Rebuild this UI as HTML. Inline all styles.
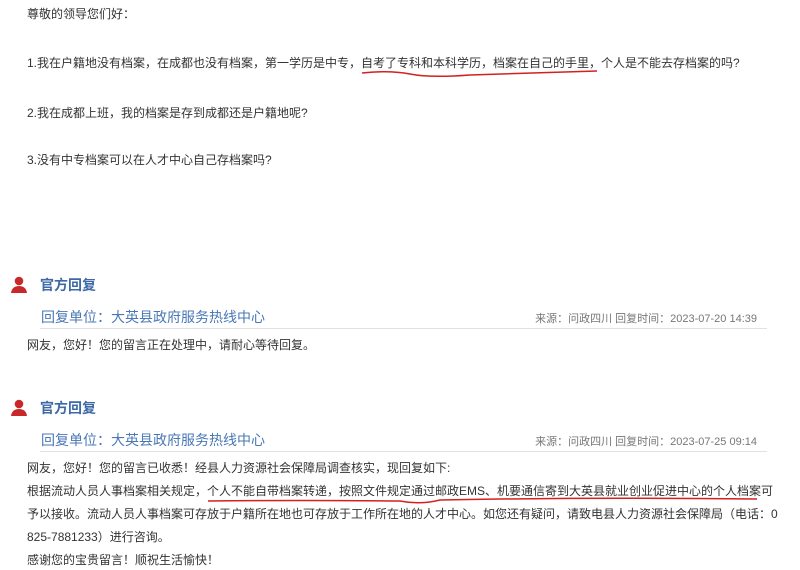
<!DOCTYPE html>
<html><head><meta charset="utf-8"><style>
body{margin:0;width:800px;height:570px;background:#fff;position:relative;overflow:hidden;font-family:"Liberation Sans","Noto Sans CJK SC",sans-serif;color:#333;font-size:12px}
.t{position:absolute;white-space:nowrap;line-height:16px}
.h{position:absolute;left:40px;font-size:14px;font-weight:bold;color:#3d6aa6;white-space:nowrap}
.u{position:absolute;left:41px;font-size:14px;color:#4a78b5;white-space:nowrap}
.s{position:absolute;right:43px;font-size:11px;color:#777;white-space:nowrap}
.d{position:absolute;left:40px;width:727px;height:1px;background:#e2e2e2}
.ic{position:absolute;left:10px;width:18px;height:17px}
</style></head><body>
<div class="t" style="left:27px;top:6px">尊敬的领导您们好：</div>
<div class="t" style="left:27px;top:55px">1.我在户籍地没有档案，在成都也没有档案，第一学历是中专，自考了专科和本科学历，档案在自己的手里，个人是不能去存档案的吗?</div>
<div class="t" style="left:27px;top:105px">2.我在成都上班，我的档案是存到成都还是户籍地呢?</div>
<div class="t" style="left:27px;top:152px">3.没有中专档案可以在人才中心自己存档案吗?</div>

<svg class="ic" style="top:276px" viewBox="0 0 18 17"><circle cx="9" cy="5" r="4.3" fill="#c8282a"/><path d="M1 17 Q2 10 9 10 Q16 10 17 17Z" fill="#c8282a"/></svg>
<div class="h" style="top:275px">官方回复</div>
<div class="u" style="top:307px">回复单位：大英县政府服务热线中心</div>
<div class="s" style="top:310px">来源：问政四川 回复时间：2023-07-20 14:39</div>
<div class="d" style="top:328px"></div>
<div class="t" style="left:27px;top:337px">网友，您好！您的留言正在处理中，请耐心等待回复。</div>

<svg class="ic" style="top:399px" viewBox="0 0 18 17"><circle cx="9" cy="5" r="4.3" fill="#c8282a"/><path d="M1 17 Q2 10 9 10 Q16 10 17 17Z" fill="#c8282a"/></svg>
<div class="h" style="top:398px">官方回复</div>
<div class="u" style="top:430px">回复单位：大英县政府服务热线中心</div>
<div class="s" style="top:433px">来源：问政四川 回复时间：2023-07-25 09:14</div>
<div class="d" style="top:451px"></div>
<div class="t" style="left:27px;top:460px">网友，您好！您的留言已收悉！经县人力资源社会保障局调查核实，现回复如下:</div>
<div class="t" style="left:27px;top:483px">根据流动人员人事档案相关规定，个人不能自带档案转递，按照文件规定通过邮政EMS、机要通信寄到大英县就业创业促进中心的个人档案可</div>
<div class="t" style="left:27px;top:506px">予以接收。流动人员人事档案可存放于户籍所在地也可存放于工作所在地的人才中心。如您还有疑问，请致电县人力资源社会保障局（电话：0</div>
<div class="t" style="left:27px;top:529px">825-7881233）进行咨询。</div>
<div class="t" style="left:27px;top:552px">感谢您的宝贵留言！顺祝生活愉快！</div>

<svg style="position:absolute;left:0;top:0" width="800" height="570">
<path d="M362 73 Q390 70 410 74 Q430 78 470 75 Q540 73 597 71" stroke="#d42020" stroke-width="1.5" fill="none"/>
<path d="M208 501 Q300 500 400 501 Q420 505 440 500 Q600 497 757 499" stroke="#d42020" stroke-width="1.5" fill="none"/>
</svg>
</body></html>
